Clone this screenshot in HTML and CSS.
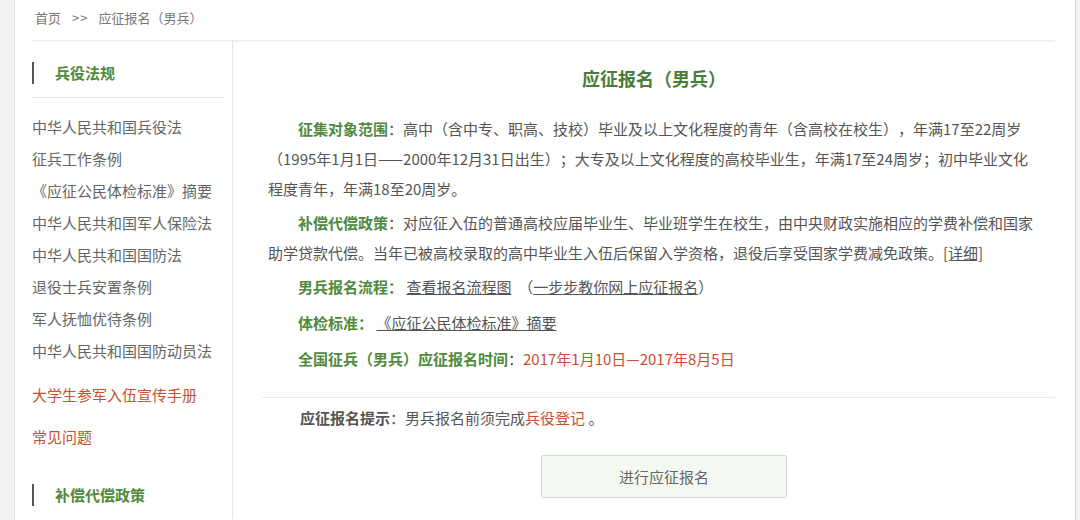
FILE: index.html
```html
<!DOCTYPE html>
<html>
<head>
    <meta charset="utf-8">
    <title>应征报名（男兵）</title>
    <link rel="stylesheet" href="styles.css">
</head>
<body>
    <div class="page">
        <div class="crumb">
            <a href="#">首页</a><span class="sep">&gt;&gt;</span><span>应征报名（男兵）</span>
        </div>

        <div class="layout">
            <div class="sidebar">
                <h3 class="side-title"><span>兵役法规</span></h3>
                <ul class="side-links">
                    <li><a href="#">中华人民共和国兵役法</a></li>
                    <li><a href="#">征兵工作条例</a></li>
                    <li><a href="#">《应征公民体检标准》摘要</a></li>
                    <li><a href="#">中华人民共和国军人保险法</a></li>
                    <li><a href="#">中华人民共和国国防法</a></li>
                    <li><a href="#">退役士兵安置条例</a></li>
                    <li><a href="#">军人抚恤优待条例</a></li>
                    <li><a href="#">中华人民共和国国防动员法</a></li>
                </ul>
                <ul class="side-links red">
                    <li><a href="#">大学生参军入伍宣传手册</a></li>
                    <li><a href="#">常见问题</a></li>
                </ul>
                <h3 class="side-title next"><span>补偿代偿政策</span></h3>
            </div>

            <div class="main">
                <h2 class="title">应征报名（男兵）</h2>

                <p class="para"><b>征集对象范围</b>：高中（含中专、职高、技校）毕业及以上文化程度的青年（含高校在校生），年满17至22周岁（1995年1月1日——2000年12月31日出生）；大专及以上文化程度的高校毕业生，年满17至24周岁；初中毕业文化程度青年，年满18至20周岁。</p>
                <p class="para"><b>补偿代偿政策</b>：对应征入伍的普通高校应届毕业生、毕业班学生在校生，由中央财政实施相应的学费补偿和国家助学贷款代偿。当年已被高校录取的高中毕业生入伍后保留入学资格，退役后享受国家学费减免政策。<a href="#">[详细]</a></p>
                <p class="row"><b>男兵报名流程：</b> <a href="#">查看报名流程图</a> &nbsp;（<a href="#">一步步教你网上应征报名</a>）</p>
                <p class="row"><b>体检标准：</b> <a href="#">《应征公民体检标准》摘要</a></p>
                <p class="row"><b>全国征兵（男兵）应征报名时间</b>：<span class="date">2017年1月10日—2017年8月5日</span></p>

                <div class="tip">
                    <b>应征报名提示</b>：男兵报名前须完成<a href="#" class="hl">兵役登记</a> 。
                </div>

                <a href="#" class="btn">进行应征报名</a>
            </div>
        </div>
    </div>
</body>
</html>
```

FILE: styles.css
```css
body {
    margin: 0;
    background: #f1f4f3;
    font-family: "Noto Sans CJK SC", "Noto Sans", sans-serif;
    color: #555;
    text-spacing-trim: space-all;
}
a { color: inherit; text-decoration: none; }

.page {
    margin-left: 14px;
    width: 1023px;
    height: 520px;
    overflow: hidden;
    padding: 0 20px 0 17px;
    background: #fff;
    border-left: 1px solid #dfe2e1;
    border-right: 1px solid #d4d4d4;
}

.crumb {
    height: 40px;
    line-height: 36px;
    padding-left: 3px;
    font-size: 13px;
    color: #777;
    border-bottom: 1px solid #ebebeb;
    box-shadow: 0 1px 2px #f4f4f4;
}
.crumb .sep { margin: 0 10px 0 11px; letter-spacing: 1px; }

.layout { display: flex; }

.sidebar {
    width: 192px;
    padding-right: 8px;
    border-right: 1px solid #e6e6e6;
}
.side-title {
    margin: 0;
    padding: 21px 0 13px;
    border-bottom: 1px solid #e6e6e6;
    font-size: 15px;
    color: #4f8a3e;
}
.side-title span {
    display: block;
    line-height: 22px;
    padding-left: 21px;
    border-left: 2px solid #555;
}
.side-title.next { padding-top: 26px; border-bottom: none; }

.side-links {
    list-style: none;
    margin: 0;
    padding: 13px 0 0;
    font-size: 15px;
    line-height: 32px;
    color: #666;
}
.side-links.red {
    padding-top: 7px;
    line-height: 42px;
    color: #c9502f;
}

.main {
    flex: 1;
    padding: 0 15px 0 35px;
    font-size: 15px;
}
.title {
    margin: 24px 0 23px;
    text-align: center;
    font-size: 18px;
    line-height: 26px;
    color: #4b7d3a;
}
.main p { margin: 0; line-height: 30px; }
.main b { color: #4f8a3e; }
.main a { text-decoration: underline; }
.para { text-indent: 2em; margin-bottom: 4px !important; }
.row { padding-left: 2em; margin-top: 1px !important; margin-bottom: 6px !important; }
.date { color: #c9502f; }

.tip {
    margin: 23px -15px 0 -6px;
    padding: 5px 0 0 38px;
    border-top: 1px solid #ebebeb;
    line-height: 30px;
}
.tip b { color: #555; }
.tip .hl { color: #c9502f; text-decoration: none; }

.btn {
    display: block;
    width: 244px;
    height: 41px;
    margin: 22px 0 0 273px;
    line-height: 41px;
    text-align: center;
    background: #f3f8f1;
    border: 1px solid #d5d8d4;
    border-radius: 2px;
    color: #666;
    text-decoration: none !important;
}
```
